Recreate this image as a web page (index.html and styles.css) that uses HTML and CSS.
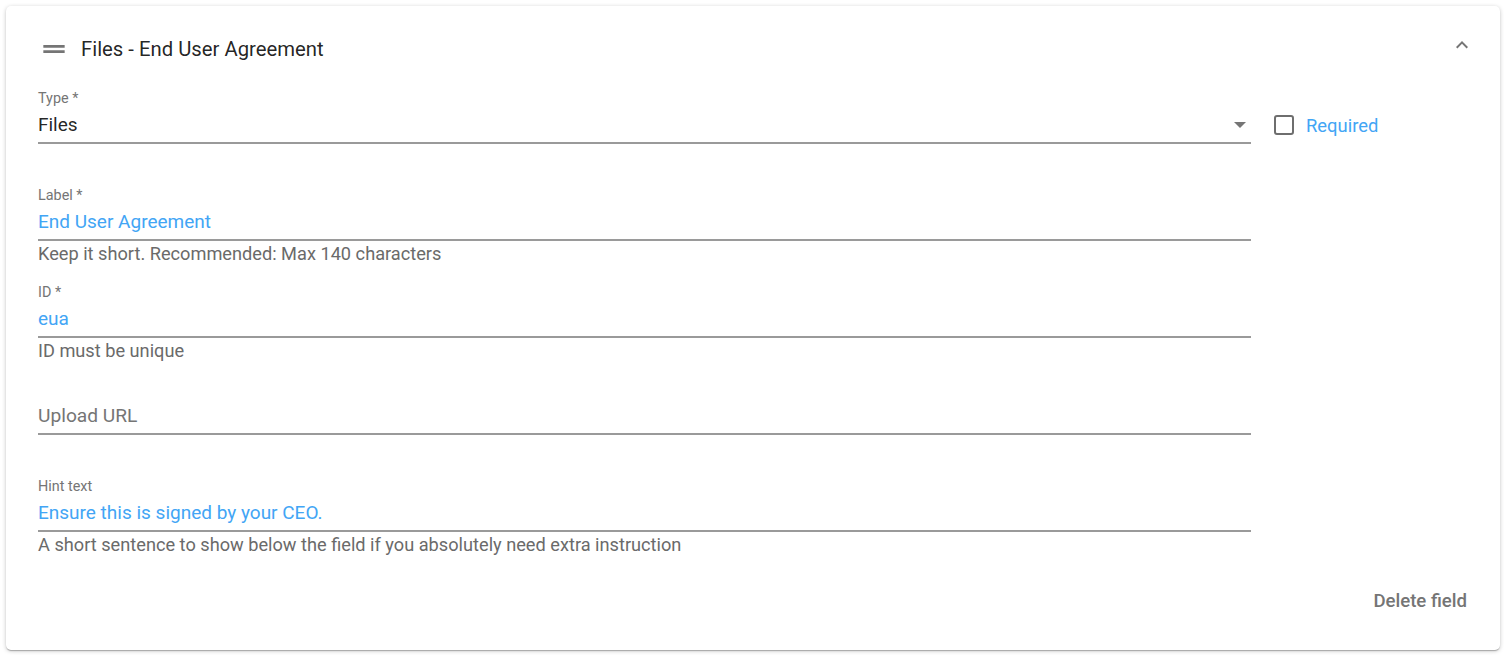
FILE: index.html
```html
<!DOCTYPE html>
<html lang="en">
<head>
<meta charset="utf-8">
<title>Files - End User Agreement</title>
<link rel="stylesheet" href="styles.css">
</head>
<body>
<div class="page">
  <section class="card">
    <header class="card-header">
      <svg class="drag-icon" viewBox="0 0 24 24" width="32" height="32" aria-hidden="true"><path d="M20 9H4v2h16V9zM4 15h16v-2H4v2z"/></svg>
      <h2 class="card-title">Files - End User Agreement</h2>
      <button class="collapse-btn" aria-label="Collapse">
        <svg viewBox="0 0 24 24" width="24" height="24" aria-hidden="true"><path d="M12 8l-6 6 1.41 1.41L12 10.83l4.59 4.58L18 14z"/></svg>
      </button>
    </header>

    <div class="row">
      <div class="field field-main">
        <label class="field-label">Type *</label>
        <div class="field-input">
          <span class="value dark">Files</span>
          <svg class="select-arrow" viewBox="0 0 12 6" width="12" height="6" aria-hidden="true"><path d="M0 0l6 6 6-6z"/></svg>
        </div>
        <div class="field-line"></div>
        <div class="field-help"></div>
      </div>
      <label class="check">
        <span class="check-box"></span>
        <span class="check-text">Required</span>
      </label>
    </div>

    <div class="field field-main">
      <label class="field-label">Label *</label>
      <div class="field-input"><span class="value blue">End User Agreement</span></div>
      <div class="field-line"></div>
      <div class="field-help">Keep it short. Recommended: Max 140 characters</div>
    </div>

    <div class="field field-main">
      <label class="field-label">ID *</label>
      <div class="field-input"><span class="value blue">eua</span></div>
      <div class="field-line"></div>
      <div class="field-help">ID must be unique</div>
    </div>

    <div class="field field-main">
      <label class="field-label"></label>
      <div class="field-input"><span class="value placeholder">Upload URL</span></div>
      <div class="field-line"></div>
      <div class="field-help"></div>
    </div>

    <div class="field field-main">
      <label class="field-label">Hint text</label>
      <div class="field-input"><span class="value blue">Ensure this is signed by your CEO.</span></div>
      <div class="field-line"></div>
      <div class="field-help">A short sentence to show below the field if you absolutely need extra instruction</div>
    </div>

    <div class="actions">
      <button class="text-btn">Delete field</button>
    </div>
  </section>
</div>
</body>
</html>
```

FILE: styles.css
```css
* { box-sizing: border-box; }
html, body { margin: 0; padding: 0; background: #fff; }
body {
  font-family: Roboto, "Liberation Sans", Arial, sans-serif;
  color: rgba(0,0,0,0.87);
}
.page { padding: 6px; }
.card {
  background: #fff;
  border-radius: 5px;
  box-shadow: 0 1px 4px rgba(0,0,0,0.22), 0 1px 1px rgba(0,0,0,0.14), 0 2px 1px -1px rgba(0,0,0,0.12);
  padding: 24px 24px 26px 32px;
  height: 644px;
  display: flex;
  flex-direction: column;
}
.card-header {
  display: flex;
  align-items: center;
  height: 38px;
  margin-bottom: 23px;
}
.drag-icon { fill: #757575; flex: none; }
.card-title {
  margin: 0 0 0 11px;
  font-size: 20.3px;
  font-weight: 400;
  color: rgba(0,0,0,0.87);
  flex: 1;
  line-height: 38px;
}
.collapse-btn {
  border: 0;
  background: none;
  padding: 0;
  margin: -8px 2px 0 0;
  width: 24px;
  height: 24px;
  display: flex;
  fill: #757575;
}
.row { display: flex; align-items: flex-start; }
.field-main { width: 1213px; flex: none; }
.field { display: flex; flex-direction: column; margin-bottom: 22px; }
.field-label {
  display: block;
  height: 16px;
  line-height: 16px;
  font-size: 14.4px;
  color: #757575;
}
.field-input {
  height: 35px;
  display: flex;
  align-items: center;
}
.value { font-size: 19px; line-height: 24px; flex: 1; }
.value.dark { color: rgba(0,0,0,0.87); }
.value.blue { color: #42a5f5; }
.value.placeholder { color: #757575; font-size: 19.2px; }
.select-arrow { fill: #757575; margin-right: 5px; }
.field-line { height: 2px; background: #9a9a9a; }
.field-help {
  height: 22px;
  line-height: 26px;
  font-size: 18.2px;
  color: #6a6a6a;
}
.check {
  display: flex;
  align-items: center;
  margin: 24px 0 0 23px;
  height: 20px;
  cursor: pointer;
}
.check-box {
  width: 20px;
  height: 20px;
  border: 2px solid #6e6e6e;
  border-radius: 3px;
}
.check-text {
  margin-left: 12px;
  font-size: 18.4px;
  color: #42a5f5;
}
.actions {
  display: flex;
  justify-content: flex-end;
  margin-top: auto;
}
.text-btn {
  border: 0;
  background: none;
  font-family: inherit;
  font-size: 18.6px;
  font-weight: 500;
  color: #757575;
  padding: 0 9px;
  height: 50px;
}
```
